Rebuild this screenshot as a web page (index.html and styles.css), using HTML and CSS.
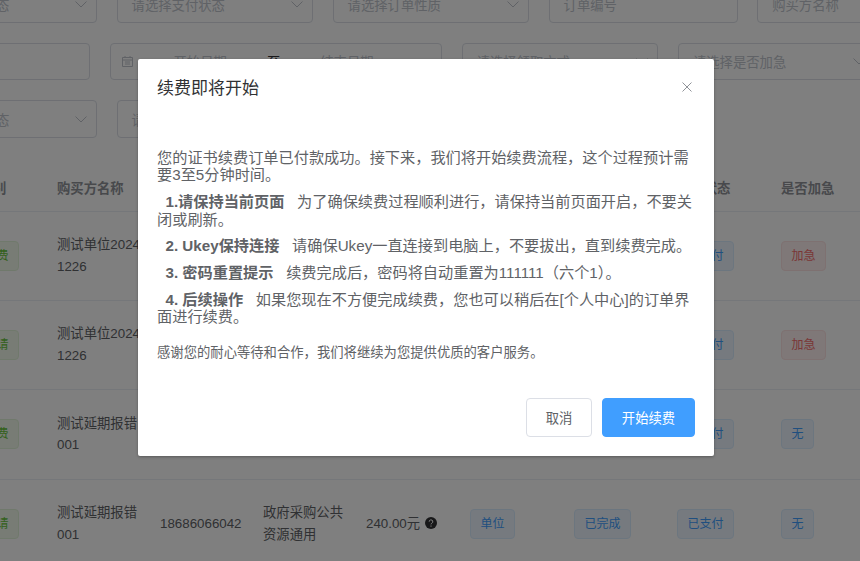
FILE: index.html
```html
<!DOCTYPE html>
<html lang="zh-CN">
<head>
<meta charset="utf-8">
<title>续费即将开始</title>
<link rel="stylesheet" href="styles.css">
</head>
<body>
<div class="page">
  <div class="filters">
    <div class="frow">
      <div class="field w1"><span class="ph">请选择订单状态</span><svg class="chev" viewBox="0 0 12 7"><path d="M.5 .5l5.500 5.500 5.500-5.500"/></svg></div>
      <div class="field w2"><span class="ph">请选择支付状态</span><svg class="chev" viewBox="0 0 12 7"><path d="M.5 .5l5.500 5.500 5.500-5.500"/></svg></div>
      <div class="field w2"><span class="ph">请选择订单性质</span><svg class="chev" viewBox="0 0 12 7"><path d="M.5 .5l5.500 5.500 5.500-5.500"/></svg></div>
      <div class="field w3"><span class="ph">订单编号</span></div>
      <div class="field w4"><span class="ph">购买方名称</span></div>
    </div>
    <div class="frow">
      <div class="field w5"></div>
      <div class="field w6">
        <svg class="cal" viewBox="0 0 11 11"><path d="M.5 1.500h10v9H.5zM.5 4h10M3 6h5M3 8h5M3 0v2M8 0v2"/></svg>
        <span class="ph dstart">开始日期</span><span class="to">至</span><span class="ph dend">结束日期</span>
      </div>
      <div class="field w7"><span class="ph">请选择领取方式</span><svg class="chev" viewBox="0 0 12 7"><path d="M.5 .5l5.500 5.500 5.500-5.500"/></svg></div>
      <div class="field w8"><span class="ph">请选择是否加急</span><svg class="chev" viewBox="0 0 12 7"><path d="M.5 .5l5.500 5.500 5.500-5.500"/></svg></div>
    </div>
    <div class="frow">
      <div class="field w1"><span class="ph">请选择发票状态</span><svg class="chev" viewBox="0 0 12 7"><path d="M.5 .5l5.500 5.500 5.500-5.500"/></svg></div>
      <div class="field w2"><span class="ph">请选择</span></div>
    </div>
  </div>
  <div class="table">
    <div class="thead">
      <span class="c0">订单类别</span><span class="c1">购买方名称</span><span class="c6">支付状态</span><span class="c7">是否加急</span>
    </div>
    <div class="trow r1">
      <span class="c0"><span class="tag green">待续费</span></span>
      <span class="c1">测试单位2024<br>1226</span>
      <span class="c6"><span class="tag blue">已支付</span></span>
      <span class="c7"><span class="tag red">加急</span></span>
    </div>
    <div class="trow r2">
      <span class="c0"><span class="tag green">待申请</span></span>
      <span class="c1">测试单位2024<br>1226</span>
      <span class="c6"><span class="tag blue">已支付</span></span>
      <span class="c7"><span class="tag red">加急</span></span>
    </div>
    <div class="trow r3">
      <span class="c0"><span class="tag green">待续费</span></span>
      <span class="c1">测试延期报错<br>001</span>
      <span class="c6"><span class="tag blue">已支付</span></span>
      <span class="c7"><span class="tag blue">无</span></span>
    </div>
    <div class="trow r4">
      <span class="c0"><span class="tag green">待申请</span></span>
      <span class="c1">测试延期报错<br>001</span>
      <span class="c2">18686066042</span>
      <span class="c3">政府采购公共<br>资源通用</span>
      <span class="c4">240.00元 <svg class="help" viewBox="0 0 12 12"><circle cx="6" cy="6" r="6"/><path d="M4.200 4.700a1.800 1.800 0 1 1 2.700 1.500c-.6.350-.9.700-.9 1.200M6 8.500v1.200"/></svg></span>
      <span class="c5"><span class="tag blue">单位</span></span>
      <span class="c5b"><span class="tag blue">已完成</span></span>
      <span class="c6"><span class="tag blue">已支付</span></span>
      <span class="c7"><span class="tag blue">无</span></span>
    </div>
  </div>
</div>
<div class="overlay">
  <div class="dialog">
    <div class="dhead">
      <h2 class="title">续费即将开始</h2>
      <svg class="close" viewBox="0 0 10 10"><path d="M.5 .5l9 9M9.500 .5l-9 9"/></svg>
    </div>
    <div class="dbody">
      <p>您的证书续费订单已付款成功。接下来，我们将开始续费流程，这个过程预计需要3至5分钟时间。</p>
      <p>&nbsp;&nbsp;<b>1.请保持当前页面</b>&nbsp;&nbsp;&nbsp;为了确保续费过程顺利进行，请保持当前页面开启，不要关闭或刷新。</p>
      <p>&nbsp;&nbsp;<b>2. Ukey保持连接</b>&nbsp;&nbsp;&nbsp;请确保Ukey一直连接到电脑上，不要拔出，直到续费完成。</p>
      <p>&nbsp;&nbsp;<b>3. 密码重置提示</b>&nbsp;&nbsp;&nbsp;续费完成后，密码将自动重置为111111（六个1）。</p>
      <p>&nbsp;&nbsp;<b>4. 后续操作</b>&nbsp;&nbsp;&nbsp;如果您现在不方便完成续费，您也可以稍后在[个人中心]的订单界面进行续费。</p>
      <p class="thanks">感谢您的耐心等待和合作，我们将继续为您提供优质的客户服务。</p>
    </div>
    <div class="dfoot">
      <button class="btn">取消</button>
      <button class="btn primary">开始续费</button>
    </div>
  </div>
</div>
</body>
</html>
```
FILE: styles.css
```css
* { box-sizing: border-box; }
html, body { margin: 0; height: 100%; overflow: hidden; }
body {
  background: #fff;
  font-family: "Liberation Sans", "Noto Sans CJK SC", sans-serif;
  font-size: 13.33px;
  color: #606266;
  position: relative;
}
.page { height: 561px; overflow: hidden; }
.filters { display: flex; flex-direction: column; gap: 20px; margin: -14.3px 0 0 -99px; }
.frow { display: flex; gap: 19.6px; }
.field {
  height: 37.33px;
  border: 1px solid #dcdfe6;
  border-radius: 4px;
  padding: 0 9px 0 14px;
  display: flex;
  align-items: center;
  justify-content: space-between;
  flex: none;
  background: #fff;
}
.ph { color: #c0c4cc; white-space: nowrap; }
.w1 { width: 196px; }
.w2 { width: 196.400px; }
.w3 { width: 189px; }
.w4 { width: 189px; }
.w5 { width: 189px; }
.w6 { width: 332.400px; justify-content: flex-start; padding-left: 11px; }
.w7 { width: 196.800px; }
.w8 { width: 196.800px; }
.chev { width: 12px; height: 7px; fill: none; stroke: #c0c4cc; stroke-width: 1; flex: none; }
.cal { width: 11px; height: 11px; fill: none; stroke: #c0c4cc; stroke-width: 1; flex: none; }
.dstart { margin-left: 41px; }
.to { margin-left: 40px; color: #303133; }
.dend { margin-left: 40px; }
.table { margin-left: -60px; }
.thead, .trow {
  display: grid;
  grid-template-columns: 117px 103px 103px 103px 104px 104px 103px 104px 1fr;
  border-bottom: 1px solid #ebeef5;
  align-items: center;
}
.thead { margin-top: 36px; height: 38px; font-weight: 700; color: #909399; padding-bottom: 10px; }
.trow { height: 89px; line-height: 21.5px; color: #606266; }
.r3 { height: 90px; }
.r4 { height: 88px; border-bottom: 0; }
.c0 { grid-column: 1; padding-left: 22px; white-space: nowrap; }
.thead .c0 { padding-left: 13px; }
.c1 { grid-column: 2; white-space: nowrap; }
.c2 { grid-column: 3; }
.c3 { grid-column: 4; }
.c4 { grid-column: 5; white-space: nowrap; }
.c5 { grid-column: 6; }
.c5b { grid-column: 7; }
.c6 { grid-column: 8; white-space: nowrap; }
.c7 { grid-column: 9; white-space: nowrap; }
.tag {
  display: block;
  width: fit-content;
  height: 30px;
  line-height: 28px;
  padding: 0 9.500px;
  border-radius: 4px;
  font-size: 12px;
  border: 1px solid #d9ecff;
  background: #ecf5ff;
  color: #409eff;
  white-space: nowrap;
}
.tag.green { background: #f0f9eb; border-color: #e1f3d8; color: #67c23a; }
.tag.red { background: #fef0f0; border-color: #fde2e2; color: #f56c6c; }
.help { width: 12px; height: 12px; vertical-align: -1.500px; margin-left: 1px; fill: #303133; stroke: #fff; stroke-width: 1; }
.help circle { stroke: none; }
.help path { fill: none; }
.overlay {
  position: absolute;
  inset: 0;
  background: rgba(0, 0, 0, .5);
  padding: 59px 0 0 138px;
}
.dialog {
  width: 576px;
  height: 397px;
  background: #fff;
  border-radius: 2px;
  box-shadow: 0 1px 3px rgba(0, 0, 0, .3);
  display: flex;
  flex-direction: column;
}
.dhead { display: flex; justify-content: space-between; align-items: flex-start; padding: 18px 22px 0 19px; }
.title { margin: 0; font-size: 17px; line-height: 24px; font-weight: 400; color: #303133; }
.close { width: 10px; height: 10px; margin-top: 5px; fill: none; stroke: #909399; stroke-width: 1; }
.dbody { padding: 47.500px 19px 0; color: #606266; font-size: 15.200px; line-height: 17.700px; }
.dbody p { margin: 0 0 9px; }
.dbody b { font-weight: 700; }
.dbody .thanks { font-size: 13.330px; margin: 17.500px 0 0; }
.dfoot { margin-top: auto; display: flex; justify-content: flex-end; gap: 10px; padding: 0 19px 19px; }
.btn {
  font: inherit;
  height: 39px;
  width: 66px;
  border: 1px solid #dcdfe6;
  border-radius: 4px;
  background: #fff;
  color: #606266;
  padding: 0;
}
.btn.primary { width: 93px; border-color: #409eff; background: #409eff; color: #fff; }
```
